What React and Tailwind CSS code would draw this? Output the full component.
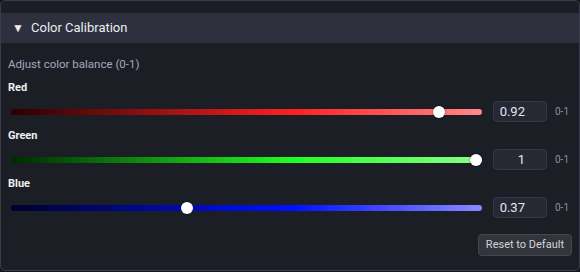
import React from "react";

const rows = [
  { label: "Red", value: "0.92", v: 0.92, grad: "linear-gradient(to right, #2a0000, #ff2020 60%, #ff8a8a)" },
  { label: "Green", value: "1", v: 1, grad: "linear-gradient(to right, #002a00, #20ff20 60%, #8aff8a)" },
  { label: "Blue", value: "0.37", v: 0.37, grad: "linear-gradient(to right, #00002e, #0010ff 60%, #8a8aff)" },
];

function Row({ label, value, v, grad }) {
  return (
    <div className="flex flex-col">
      <div className="text-[11px] font-bold leading-[14px] text-[#f0f0f4]">{label}</div>
      <div className="mt-[6px] flex h-[21px] items-center">
        <div className="relative ml-[3px] h-[6px] w-[471px] rounded-full" style={{ background: grad }}>
          <div
            className="absolute top-1/2 h-[12px] w-[12px] -translate-x-1/2 -translate-y-1/2 rounded-full bg-white shadow-[0_0_2px_rgba(0,0,0,0.6)]"
            style={{ left: `${6 + v * 459}px` }}
          />
        </div>
        <div className="ml-[11px] flex h-[21px] w-[54px] items-center justify-end rounded-[4px] border border-[#353847] bg-[#262834] pr-[21px] text-[13px] text-[#e4e6ee]">
          {value}
        </div>
        <div className="ml-[8px] text-[10px] text-[#8a90a2]">0-1</div>
      </div>
    </div>
  );
}

export default function App() {
  return (
    <div className="h-[272px] w-[580px] bg-[#15161c]" style={{ fontFamily: "Roboto, 'Liberation Sans', sans-serif" }}>
      <div className="flex h-[271px] w-[580px] flex-col rounded-[5px] border border-[#3a3c4b] bg-[#1c1e26] pt-[12px]">
        <div className="flex h-[30px] items-center bg-[#2e303d] pl-[11px] text-[#ececf2]">
          <span className="w-[8px] text-[12px] leading-none">▼</span>
          <span className="ml-[11px] text-[13px]">Color Calibration</span>
        </div>
        <div className="flex flex-col px-[7px] pt-[13px]">
          <div className="text-[11.5px] leading-[16px] text-[#a3a8bd]">Adjust color balance (0-1)</div>
          <div className="mt-[9px] flex flex-col gap-[7px]">
            {rows.map((r) => (
              <Row key={r.label} {...r} />
            ))}
          </div>
          <div className="mt-[16px] flex justify-end">
            <button className="h-[22px] rounded-[4px] border border-[#45474f] bg-[#33353d] px-[7px] text-[11px] text-[#d4d4d8]">
              Reset to Default
            </button>
          </div>
        </div>
      </div>
    </div>
  );
}
